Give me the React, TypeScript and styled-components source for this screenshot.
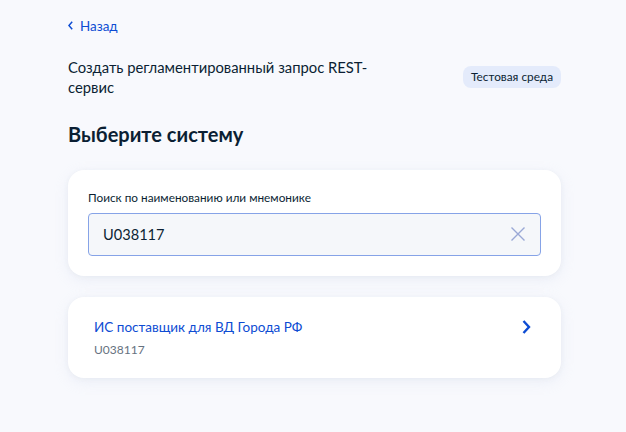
import styled, { createGlobalStyle } from 'styled-components';

const GlobalStyle = createGlobalStyle`
    html, body {
        margin: 0;
        padding: 0;
        background: #f8f9fd;
    }
    body {
        font-family: Lato, 'Noto Sans', sans-serif;
        color: #0b1f33;
        -webkit-font-smoothing: antialiased;
    }
`;

const Page = styled.div`
    width: 493px;
    margin-left: 68px;
    padding-top: 14px;
    padding-bottom: 40px;
`;

const BackLink = styled.a`
    display: inline-flex;
    align-items: center;
    gap: 7px;
    font-size: 13.4px;
    line-height: 20px;
    color: #0d4cd3;
    text-decoration: none;
    cursor: pointer;
`;

const HeaderRow = styled.div`
    display: flex;
    justify-content: space-between;
    align-items: center;
    margin-top: 21px;
`;

const RequestTitle = styled.div`
    max-width: 310px;
    font-size: 14.8px;
    line-height: 20px;
`;

const Badge = styled.span`
    height: 22px;
    padding: 0 8px;
    display: inline-flex;
    align-items: center;
    border-radius: 8px;
    background: #e4ebfb;
    font-size: 11.8px;
    color: #0b1f33;
    white-space: nowrap;
`;

const Heading = styled.h1`
    margin: 23px 0 22px;
    font-size: 20px;
    line-height: 28px;
    font-weight: 700;
`;

const Card = styled.div<{ $clickable?: boolean }>`
    background: #fff;
    border-radius: 16px;
    box-shadow: 0 1px 4px rgba(228, 232, 238, 0.6), 0 4px 14px rgba(210, 218, 236, 0.3);
    cursor: ${({ $clickable }) => ($clickable ? 'pointer' : 'default')};
`;

const SearchCard = styled(Card)`
    padding: 20px;
    margin-bottom: 21px;
`;

const Label = styled.label`
    display: block;
    font-size: 11.8px;
    line-height: 16px;
    margin-bottom: 7px;
`;

const InputBox = styled.div`
    height: 43px;
    box-sizing: border-box;
    display: flex;
    align-items: center;
    padding: 0 15px 0 14px;
    background: #f5f7fa;
    border: 1px solid #86a3e7;
    border-radius: 4px;
`;

const Input = styled.input`
    flex: 1;
    border: 0;
    outline: none;
    background: transparent;
    font-family: inherit;
    font-size: 14.6px;
    color: #0b1f33;
    padding: 0;
`;

const ClearButton = styled.button`
    border: 0;
    background: none;
    padding: 0;
    display: flex;
    cursor: pointer;
`;

const ResultCard = styled(Card)`
    display: flex;
    align-items: flex-start;
    justify-content: space-between;
    padding: 20px 30px 18px 26px;
`;

const ResultText = styled.div`
    display: flex;
    flex-direction: column;
    gap: 3px;
`;

const ResultName = styled.span`
    font-size: 13.5px;
    line-height: 20px;
    color: #0d4cd3;
`;

const ResultCode = styled.span`
    font-size: 12px;
    line-height: 20px;
    color: #66727f;
`;

const ChevronWrap = styled.span`
    display: flex;
    padding-top: 3px;
`;

export default function App() {
    return (
        <>
            <GlobalStyle />
            <Page>
                <BackLink>
                    <svg width='5' height='9' viewBox='0 0 5 9' fill='none'>
                        <path d='M4.2 0.8 L0.9 4.5 L4.2 8.2' stroke='#0d4cd3' strokeWidth='1.5' />
                    </svg>
                    Назад
                </BackLink>
                <HeaderRow>
                    <RequestTitle>Создать регламентированный запрос REST-сервис</RequestTitle>
                    <Badge>Тестовая среда</Badge>
                </HeaderRow>
                <Heading>Выберите систему</Heading>
                <SearchCard>
                    <Label>Поиск по наименованию или мнемонике</Label>
                    <InputBox>
                        <Input defaultValue='U038117' />
                        <ClearButton aria-label='Очистить'>
                            <svg width='14' height='14' viewBox='0 0 14 14' fill='none'>
                                <path d='M0.5 0.5 L13.5 13.5 M13.5 0.5 L0.5 13.5' stroke='#9aa8d6' strokeWidth='1.4' />
                            </svg>
                        </ClearButton>
                    </InputBox>
                </SearchCard>
                <ResultCard $clickable>
                    <ResultText>
                        <ResultName>ИС поставщик для ВД Города РФ</ResultName>
                        <ResultCode>U038117</ResultCode>
                    </ResultText>
                    <ChevronWrap>
                        <svg width='9' height='14' viewBox='0 0 9 14' fill='none'>
                            <path d='M1.5 1 L7 7 L1.5 13' stroke='#0d4cd3' strokeWidth='2.4' />
                        </svg>
                    </ChevronWrap>
                </ResultCard>
            </Page>
        </>
    );
}
